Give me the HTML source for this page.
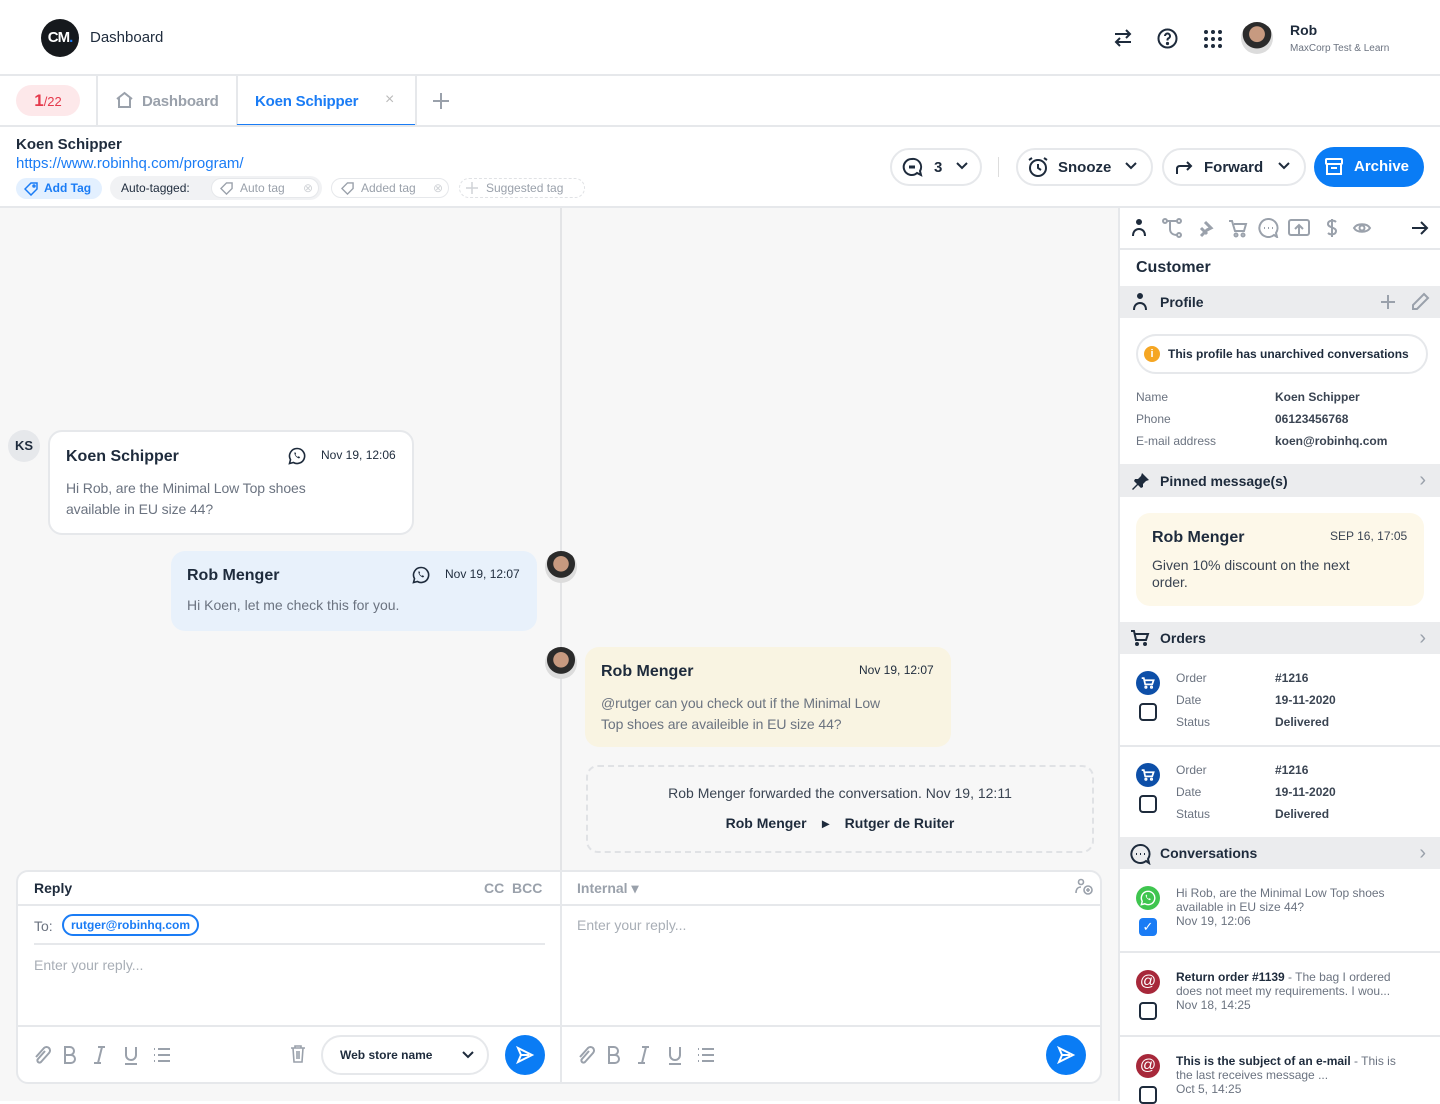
<!DOCTYPE html>
<html><head><meta charset="utf-8"><style>
*{box-sizing:border-box;margin:0;padding:0}
body{width:1440px;height:1101px;overflow:hidden;font-family:"Liberation Sans",sans-serif;color:#1e2b3c;background:#fff;position:relative}
.a{position:absolute}
.b{font-weight:bold}
.pill{position:absolute;border:2px solid #e6e8eb;border-radius:22px;background:#fff;font-size:15px;font-weight:bold;color:#1e2b3c}
.sec{position:absolute;left:1120px;width:320px;height:32px;background:#ebecee;font-size:14px;font-weight:bold;display:flex;align-items:center}
.lbl{position:absolute;font-size:12px;color:#6b7380}
.val{position:absolute;font-size:12px;font-weight:bold;color:#3a4452}
.bubble{position:absolute;border-radius:14px;padding:16px}
.muted{color:#6b7380}
svg{position:absolute}
.chev{position:absolute;right:14px;font-size:20px;color:#9aa1ab;font-weight:normal}
</style></head><body>
<!-- header -->
<div class="a" style="left:41px;top:19px;width:38px;height:38px;border-radius:50%;background:#16191d;color:#fff;font-weight:bold;font-size:15px;line-height:38px;text-align:center;letter-spacing:-1px">CM<span style="color:#1a7cf5">.</span></div>
<div class="a" style="left:90px;top:29px;font-size:15px">Dashboard</div>
<svg style="left:1112px;top:28px" width="22" height="20" viewBox="0 0 22 20" fill="none" stroke="#1e2b3c" stroke-width="2"><path d="M3 6h15M14 2l4 4-4 4M19 14H4M8 10l-4 4 4 4"/></svg>
<svg style="left:1157px;top:28px" width="21" height="21" viewBox="0 0 21 21" fill="none" stroke="#1e2b3c" stroke-width="2"><circle cx="10.5" cy="10.5" r="9"/><path d="M8 8a2.5 2.5 0 1 1 3.5 2.3c-.7.3-1 .8-1 1.5v.7"/><circle cx="10.5" cy="15.5" r=".6" fill="#1e2b3c"/></svg>
<svg style="left:1204px;top:30px" width="18" height="18" viewBox="0 0 18 18" fill="#1e2b3c"><circle cx="2" cy="2" r="2"/><circle cx="9" cy="2" r="2"/><circle cx="16" cy="2" r="2"/><circle cx="2" cy="9" r="2"/><circle cx="9" cy="9" r="2"/><circle cx="16" cy="9" r="2"/><circle cx="2" cy="16" r="2"/><circle cx="9" cy="16" r="2"/><circle cx="16" cy="16" r="2"/></svg>
<div class="a" style="left:1241px;top:22px;width:32px;height:32px;border-radius:50%;background:radial-gradient(circle at 50% 38%,#c79a80 0 30%,#2b2b2b 32% 55%,#dcdcdc 57%)"></div>
<div class="a b" style="left:1290px;top:22px;font-size:14px">Rob</div>
<div class="a" style="left:1290px;top:43px;font-size:10px;color:#6b7380">MaxCorp Test &amp; Learn</div>
<div class="a" style="left:0;top:74px;width:1440px;height:2px;background:#e6e8eb"></div>
<!-- tabs -->
<div class="a" style="left:16px;top:85px;width:64px;height:31px;border-radius:16px;background:#fde8ea;color:#e5394c;text-align:center;line-height:31px"><span class="b" style="font-size:17px">1</span><span style="font-size:13px">/22</span></div>
<div class="a" style="left:96px;top:76px;width:2px;height:50px;background:#e6e8eb"></div>
<svg style="left:115px;top:91px" width="19" height="18" viewBox="0 0 19 18" fill="none" stroke="#9aa1ab" stroke-width="2"><path d="M2 8l7.5-6L17 8M4 7v9h11V7"/></svg>
<div class="a b" style="left:142px;top:93px;font-size:15px;color:#9aa1ab;letter-spacing:-0.2px">Dashboard</div>
<div class="a" style="left:236px;top:76px;width:2px;height:50px;background:#e6e8eb"></div>
<div class="a b" style="left:255px;top:93px;font-size:15px;color:#1a7cf5;letter-spacing:-0.2px">Koen Schipper</div>
<div class="a" style="left:385px;top:91px;font-size:16px;color:#bbb">×</div>
<div class="a" style="left:237px;top:124px;width:180px;height:3px;background:#1a7cf5"></div>
<div class="a" style="left:415px;top:76px;width:2px;height:50px;background:#e6e8eb"></div>
<svg style="left:432px;top:92px" width="18" height="18" viewBox="0 0 18 18" stroke="#9aa1ab" stroke-width="2"><path d="M9 1v16M1 9h16"/></svg>
<div class="a" style="left:0;top:125px;width:1440px;height:2px;background:#e6e8eb"></div>
<!-- info -->
<div class="a b" style="left:16px;top:136px;font-size:15px">Koen Schipper</div>
<div class="a" style="left:16px;top:155px;font-size:15px;color:#1a7cf5">https://www.robinhq.com/program/</div>
<div class="a b" style="left:16px;top:178px;width:86px;height:21px;border-radius:11px;background:#e3f0ff;color:#1a7cf5;font-size:12px;line-height:21px;padding-left:28px">Add Tag</div>
<svg style="left:24px;top:182px" width="14" height="14" viewBox="0 0 14 14" fill="none" stroke="#1a7cf5" stroke-width="1.5"><path d="M7 1h6v6l-6 6-6-6z"/><circle cx="10" cy="4" r="1"/></svg>
<div class="a" style="left:110px;top:176px;width:212px;height:24px;border-radius:12px;background:#f1f2f4"></div>
<div class="a" style="left:121px;top:181px;font-size:12px">Auto-tagged:</div>
<div class="a" style="left:211px;top:178px;width:108px;height:20px;border-radius:10px;background:#fff;border:1px solid #e6e8eb;font-size:12px;color:#9aa1ab;line-height:18px;padding-left:28px">Auto tag<span style="position:absolute;right:5px;color:#d0d3d7">⊗</span></div>
<svg style="left:220px;top:182px" width="13" height="13" viewBox="0 0 14 14" fill="none" stroke="#9aa1ab" stroke-width="1.5"><path d="M7 1h6v6l-6 6-6-6z"/></svg>
<div class="a" style="left:331px;top:178px;width:118px;height:20px;border-radius:10px;border:1px solid #e6e8eb;font-size:12px;color:#9aa1ab;line-height:18px;padding-left:29px">Added tag<span style="position:absolute;right:5px;color:#d0d3d7">⊗</span></div>
<svg style="left:341px;top:182px" width="13" height="13" viewBox="0 0 14 14" fill="none" stroke="#9aa1ab" stroke-width="1.5"><path d="M7 1h6v6l-6 6-6-6z"/></svg>
<div class="a" style="left:459px;top:178px;width:126px;height:20px;border-radius:10px;border:1px dashed #e0e2e5;font-size:12px;color:#9aa1ab;line-height:18px;padding-left:26px">Suggested tag</div>
<svg style="left:466px;top:182px" width="12" height="12" viewBox="0 0 12 12" stroke="#d0d3d7" stroke-width="1.5"><path d="M6 0v12M0 6h12"/></svg>
<div class="pill" style="left:890px;top:148px;width:92px;height:38px"><span style="position:absolute;left:42px;top:9px">3</span></div>
<svg style="left:902px;top:157px" width="21" height="21" viewBox="0 0 21 21" fill="none" stroke="#1e2b3c" stroke-width="2"><path d="M10 2a8 8 0 1 0 5 14l4 2-1-4A8 8 0 0 0 10 2z"/><path d="M7 10h6" stroke-width="3"/></svg>
<div class="a" style="left:998px;top:157px;width:1px;height:20px;background:#ddd"></div>
<div class="pill" style="left:1016px;top:148px;width:137px;height:38px"><span style="position:absolute;left:40px;top:9px">Snooze</span></div>
<svg style="left:1027px;top:156px" width="22" height="22" viewBox="0 0 22 22" fill="none" stroke="#1e2b3c" stroke-width="2"><circle cx="11" cy="12" r="8"/><path d="M11 8v4l3 2M2 4l3-2M20 4l-3-2"/></svg>
<div class="pill" style="left:1162px;top:148px;width:144px;height:38px"><span style="position:absolute;left:40px;top:9px">Forward</span></div>
<svg style="left:1175px;top:159px" width="18" height="16" viewBox="0 0 18 16" fill="none" stroke="#1e2b3c" stroke-width="2"><path d="M2 15v-5c0-2 1-3 3-3h11M12 3l4 4-4 4"/></svg>
<svg style="left:955px;top:161px" width="14" height="10" viewBox="0 0 14 10" fill="none" stroke="#1e2b3c" stroke-width="2"><path d="M2 2l5 5 5-5"/></svg>
<svg style="left:1124px;top:161px" width="14" height="10" viewBox="0 0 14 10" fill="none" stroke="#1e2b3c" stroke-width="2"><path d="M2 2l5 5 5-5"/></svg>
<svg style="left:1277px;top:161px" width="14" height="10" viewBox="0 0 14 10" fill="none" stroke="#1e2b3c" stroke-width="2"><path d="M2 2l5 5 5-5"/></svg>
<div class="a b" style="left:1314px;top:147px;width:110px;height:40px;border-radius:20px;background:#0a7cf5;color:#fff;font-size:15px;line-height:40px;padding-left:40px">Archive</div>
<svg style="left:1324px;top:157px" width="20" height="20" viewBox="0 0 20 20" fill="none" stroke="#fff" stroke-width="2"><rect x="2" y="2" width="16" height="5" rx="1"/><path d="M3 7v10h14V7M7 11h6"/></svg>
<div class="a" style="left:0;top:206px;width:1440px;height:2px;background:#e6e8eb"></div>
<!-- chat area -->
<div class="a" style="left:0;top:208px;width:1119px;height:893px;background:#f7f7f7"></div>
<div class="a" style="left:560px;top:208px;width:2px;height:662px;background:#e3e4e6"></div>
<div class="a b" style="left:8px;top:430px;width:32px;height:32px;border-radius:50%;background:#e6e8eb;font-size:13px;text-align:center;line-height:32px">KS</div>
<div class="bubble" style="left:48px;top:430px;width:366px;height:105px;background:#fff;border:2px solid #e6e8eb"></div>
<div class="a b" style="left:66px;top:448px;font-size:16px">Koen Schipper</div>
<svg style="left:288px;top:447px" width="18" height="18" viewBox="0 0 18 18" fill="none" stroke="#1e2b3c" stroke-width="1.6"><path d="M9 1.5a7.5 7.5 0 0 0-6.5 11.2L1.5 16.5l3.9-1A7.5 7.5 0 1 0 9 1.5z"/><path d="M6.5 5.5c-.5 2 1.5 5 4.5 6l1.2-1.2-1.5-1-1 .6c-1-.5-1.8-1.3-2.2-2.3l.6-1-1-1.5z" fill="#1e2b3c" stroke="none"/></svg>
<div class="a" style="left:321px;top:448px;font-size:12px">Nov 19, 12:06</div>
<div class="a muted" style="left:66px;top:478px;font-size:14px;line-height:21px;letter-spacing:-0.1px">Hi Rob, are the Minimal Low Top shoes<br>available in EU size 44?</div>
<div class="bubble" style="left:171px;top:551px;width:366px;height:80px;background:#e8f1fb"></div>
<div class="a b" style="left:187px;top:567px;font-size:16px">Rob Menger</div>
<svg style="left:412px;top:566px" width="18" height="18" viewBox="0 0 18 18" fill="none" stroke="#1e2b3c" stroke-width="1.6"><path d="M9 1.5a7.5 7.5 0 0 0-6.5 11.2L1.5 16.5l3.9-1A7.5 7.5 0 1 0 9 1.5z"/><path d="M6.5 5.5c-.5 2 1.5 5 4.5 6l1.2-1.2-1.5-1-1 .6c-1-.5-1.8-1.3-2.2-2.3l.6-1-1-1.5z" fill="#1e2b3c" stroke="none"/></svg>
<div class="a" style="left:445px;top:567px;font-size:12px">Nov 19, 12:07</div>
<div class="a muted" style="left:187px;top:597px;font-size:14px">Hi Koen, let me check this for you.</div>
<div class="a" style="left:545px;top:551px;width:32px;height:32px;border-radius:50%;background:radial-gradient(circle at 50% 40%,#c79a80 0 30%,#2b2b2b 32% 55%,#dcdcdc 57%)"></div>
<div class="a" style="left:545px;top:647px;width:32px;height:32px;border-radius:50%;background:radial-gradient(circle at 50% 40%,#c79a80 0 30%,#2b2b2b 32% 55%,#dcdcdc 57%)"></div>
<div class="bubble" style="left:585px;top:647px;width:366px;height:100px;background:#f9f4e2"></div>
<div class="a b" style="left:601px;top:663px;font-size:16px">Rob Menger</div>
<div class="a" style="left:859px;top:663px;font-size:12px">Nov 19, 12:07</div>
<div class="a muted" style="left:601px;top:693px;font-size:14px;line-height:21px;letter-spacing:-0.1px">@rutger can you check out if the Minimal Low<br>Top shoes are availeible in EU size 44?</div>
<div class="a" style="left:586px;top:765px;width:508px;height:88px;border:2px dashed #e0e2e5;border-radius:12px"></div>
<div class="a" style="left:586px;top:785px;width:508px;text-align:center;font-size:14px;color:#3a4452">Rob Menger forwarded the conversation. Nov 19, 12:11</div>
<div class="a b" style="left:586px;top:815px;width:508px;text-align:center;font-size:14px">Rob Menger &nbsp;&nbsp;&nbsp;▸&nbsp;&nbsp;&nbsp; Rutger de Ruiter</div>
<!-- reply -->
<div class="a" style="left:16px;top:870px;width:1086px;height:214px;background:#fff;border:2px solid #e6e8eb;border-radius:12px"></div>
<div class="a" style="left:560px;top:872px;width:2px;height:210px;background:#e6e8eb"></div>
<div class="a" style="left:18px;top:904px;width:1082px;height:2px;background:#e6e8eb"></div>
<div class="a" style="left:18px;top:1025px;width:1082px;height:2px;background:#e6e8eb"></div>
<div class="a b" style="left:34px;top:880px;font-size:14px">Reply</div>
<div class="a b" style="left:484px;top:880px;font-size:14px;color:#9aa1ab">CC &nbsp;BCC</div>
<div class="a b" style="left:577px;top:880px;font-size:14px;color:#9aa1ab">Internal ▾</div>
<svg style="left:1075px;top:878px" width="18" height="18" viewBox="0 0 18 18" fill="none" stroke="#9aa1ab" stroke-width="1.6"><circle cx="6" cy="4" r="2.5"/><path d="M1 15c0-4 2-6 5-6"/><circle cx="13" cy="12" r="4"/><path d="M13 10v4M11 12h4"/></svg>
<div class="a" style="left:34px;top:918px;font-size:14px;color:#6b7380">To:</div>
<div class="a b" style="left:62px;top:914px;height:22px;padding:0 7px;border:2px solid #1a7cf5;border-radius:11px;font-size:12px;line-height:18px;color:#1a7cf5">rutger@robinhq.com</div>
<div class="a" style="left:34px;top:943px;width:511px;height:2px;background:#e6e8eb"></div>
<div class="a" style="left:34px;top:957px;font-size:14px;color:#a8aeb6">Enter your reply...</div>
<div class="a" style="left:577px;top:917px;font-size:14px;color:#a8aeb6">Enter your reply...</div>
<svg style="left:32px;top:1044px" width="150" height="22" viewBox="0 0 150 22" fill="none" stroke="#9aa1ab" stroke-width="2"><path d="M13 7l-7 8a2 2 0 0 0 3 3l8-9a3.5 3.5 0 0 0-5-5l-8 9"/><path d="M33 3h5a4 4 0 0 1 0 8h-5zM33 11h6a4 4 0 0 1 0 8h-6z"/><path d="M66 3h7M62 19h7M70 3l-4 16"/><path d="M94 3v8a5 5 0 0 0 10 0V3M93 20h12"/><path d="M126 5h12M126 11h12M126 17h12M122 5h1M122 11h1M122 17h1"/></svg>
<svg style="left:576px;top:1044px" width="150" height="22" viewBox="0 0 150 22" fill="none" stroke="#9aa1ab" stroke-width="2"><path d="M13 7l-7 8a2 2 0 0 0 3 3l8-9a3.5 3.5 0 0 0-5-5l-8 9"/><path d="M33 3h5a4 4 0 0 1 0 8h-5zM33 11h6a4 4 0 0 1 0 8h-6z"/><path d="M66 3h7M62 19h7M70 3l-4 16"/><path d="M94 3v8a5 5 0 0 0 10 0V3M93 20h12"/><path d="M126 5h12M126 11h12M126 17h12M122 5h1M122 11h1M122 17h1"/></svg>
<svg style="left:290px;top:1045px" width="16" height="18" viewBox="0 0 16 18" fill="none" stroke="#9aa1ab" stroke-width="1.6"><path d="M1 3h14M5 3V1h6v2M3 3l1 14h8l1-14M7 6v8M9 6v8"/></svg>
<div class="a b" style="left:321px;top:1035px;width:168px;height:40px;border:2px solid #e6e8eb;border-radius:20px;font-size:12px;line-height:36px;padding-left:17px">Web store name</div>
<svg style="left:461px;top:1050px" width="14" height="10" viewBox="0 0 14 10" fill="none" stroke="#1e2b3c" stroke-width="2"><path d="M2 2l5 5 5-5"/></svg>
<div class="a" style="left:505px;top:1035px;width:40px;height:40px;border-radius:50%;background:#0a7cf5"></div>
<div class="a" style="left:1046px;top:1035px;width:40px;height:40px;border-radius:50%;background:#0a7cf5"></div>
<svg style="left:515px;top:1046px" width="20" height="18" viewBox="0 0 20 18" fill="none" stroke="#fff" stroke-width="2"><path d="M3 2l14 7-14 7 3-7zM6 9h8"/></svg>
<svg style="left:1056px;top:1046px" width="20" height="18" viewBox="0 0 20 18" fill="none" stroke="#fff" stroke-width="2"><path d="M3 2l14 7-14 7 3-7zM6 9h8"/></svg>
<!-- right panel -->
<div class="a" style="left:1118px;top:208px;width:2px;height:893px;background:#e6e8eb"></div>
<svg style="left:1131px;top:219px" width="16" height="18" viewBox="0 0 16 18" fill="none" stroke="#1e2b3c" stroke-width="2"><circle cx="8" cy="3" r="2" fill="#1e2b3c"/><path d="M2 17c0-5 3-7 6-7s6 2 6 7"/></svg>
<svg style="left:1161px;top:218px" width="240" height="20" viewBox="0 0 240 20" fill="none" stroke="#9aa1ab" stroke-width="2"><circle cx="4" cy="3" r="2"/><circle cx="18" cy="3" r="2"/><circle cx="18" cy="17" r="2"/><path d="M6 3h10M9 3v8c0 4 3 6 7 6"/><path d="M44 4l6 6-4 2-6 6M40 10l6 6" stroke-width="3"/><path d="M68 3h3l3 10h9l2-7H73"/><circle cx="75" cy="17" r="1.5"/><circle cx="82" cy="17" r="1.5"/><path d="M107 1a9 9 0 1 0 6 16l3 2-1-4a9 9 0 0 0-8-14z"/><path d="M103 10h1M107 10h1M111 10h1"/><rect x="128" y="2" width="20" height="15" rx="2"/><path d="M138 18V7M134 11l4-4 4 4"/><path d="M175 4c-2-2-8-2-8 2s8 3 8 7-6 4-8 2M171 1v18"/><path d="M193 10c3-5 13-5 16 0-3 5-13 5-16 0z"/><circle cx="201" cy="10" r="2.5"/></svg>
<svg style="left:1411px;top:220px" width="18" height="16" viewBox="0 0 18 16" fill="none" stroke="#1e2b3c" stroke-width="2"><path d="M1 8h15M10 2l6 6-6 6"/></svg>
<div class="a" style="left:1120px;top:248px;width:320px;height:2px;background:#e6e8eb"></div>
<div class="a b" style="left:1136px;top:259px;font-size:16px">Customer</div>
<div class="sec" style="top:286px;padding-left:40px">Profile</div>
<svg style="left:1379px;top:293px" width="18" height="18" viewBox="0 0 18 18" stroke="#9aa1ab" stroke-width="2"><path d="M9 2v14M2 9h14"/></svg>
<svg style="left:1410px;top:292px" width="20" height="20" viewBox="0 0 20 20" fill="none" stroke="#9aa1ab" stroke-width="2"><path d="M14 2l4 4-11 11H3v-4z"/></svg>
<svg style="left:1132px;top:293px" width="16" height="18" viewBox="0 0 16 18" fill="none" stroke="#1e2b3c" stroke-width="2"><circle cx="8" cy="3" r="2" fill="#1e2b3c"/><path d="M2 17c0-5 3-7 6-7s6 2 6 7"/></svg>
<div class="a" style="left:1136px;top:334px;width:292px;height:40px;border:2px solid #e6e8eb;border-radius:20px"></div>
<div class="a b" style="left:1144px;top:346px;width:16px;height:16px;border-radius:50%;background:#f5a623;color:#fff;font-size:11px;text-align:center;line-height:16px">i</div>
<div class="a b" style="left:1168px;top:347px;font-size:12px">This profile has unarchived conversations</div>
<div class="lbl" style="left:1136px;top:390px">Name</div><div class="val" style="left:1275px;top:390px">Koen Schipper</div>
<div class="lbl" style="left:1136px;top:412px">Phone</div><div class="val" style="left:1275px;top:412px">06123456768</div>
<div class="lbl" style="left:1136px;top:434px">E-mail address</div><div class="val" style="left:1275px;top:434px">koen@robinhq.com</div>
<div class="sec" style="top:464px;height:33px;padding-left:40px">Pinned message(s)<span class="chev">›</span></div>
<svg style="left:1131px;top:472px" width="20" height="18" viewBox="0 0 20 18" fill="#1e2b3c"><path d="M11 1l7 7-3 1-3 3 0 3-2 1-3-3-5 5-1-1 5-5-3-3 1-2 3 0 3-3z"/></svg>
<div class="a" style="left:1136px;top:513px;width:288px;height:93px;background:#fdf8e9;border-radius:14px"></div>
<div class="a b" style="left:1152px;top:529px;font-size:16px">Rob Menger</div>
<div class="a" style="left:1330px;top:529px;font-size:12px;color:#3a4452">SEP 16, 17:05</div>
<div class="a" style="left:1152px;top:557px;font-size:14px;line-height:17px;color:#3a4452">Given 10% discount on the next<br>order.</div>
<div class="sec" style="top:622px;padding-left:40px">Orders<span class="chev">›</span></div>
<svg style="left:1130px;top:630px" width="20" height="16" viewBox="0 0 20 16" fill="none" stroke="#1e2b3c" stroke-width="2"><path d="M1 1h3l2 9h10l2-6H5"/><circle cx="7" cy="14" r="1"/><circle cx="15" cy="14" r="1"/></svg>
<div class="a" style="left:1136px;top:671px;width:24px;height:24px;border-radius:50%;background:#0d4fa8"></div>
<svg style="left:1141px;top:677px" width="14" height="12" viewBox="0 0 20 16" fill="none" stroke="#fff" stroke-width="2.5"><path d="M1 1h3l2 9h10l2-6H5"/><circle cx="7" cy="14" r="1"/><circle cx="15" cy="14" r="1"/></svg>
<div class="a" style="left:1139px;top:703px;width:18px;height:18px;border:2px solid #1e2b3c;border-radius:4px"></div>
<div class="lbl" style="left:1176px;top:671px">Order</div><div class="val" style="left:1275px;top:671px">#1216</div>
<div class="lbl" style="left:1176px;top:693px">Date</div><div class="val" style="left:1275px;top:693px">19-11-2020</div>
<div class="lbl" style="left:1176px;top:715px">Status</div><div class="val" style="left:1275px;top:715px">Delivered</div>
<div class="a" style="left:1120px;top:745px;width:320px;height:2px;background:#e6e8eb"></div>
<div class="a" style="left:1136px;top:763px;width:24px;height:24px;border-radius:50%;background:#0d4fa8"></div>
<svg style="left:1141px;top:769px" width="14" height="12" viewBox="0 0 20 16" fill="none" stroke="#fff" stroke-width="2.5"><path d="M1 1h3l2 9h10l2-6H5"/><circle cx="7" cy="14" r="1"/><circle cx="15" cy="14" r="1"/></svg>
<div class="a" style="left:1139px;top:795px;width:18px;height:18px;border:2px solid #1e2b3c;border-radius:4px"></div>
<div class="lbl" style="left:1176px;top:763px">Order</div><div class="val" style="left:1275px;top:763px">#1216</div>
<div class="lbl" style="left:1176px;top:785px">Date</div><div class="val" style="left:1275px;top:785px">19-11-2020</div>
<div class="lbl" style="left:1176px;top:807px">Status</div><div class="val" style="left:1275px;top:807px">Delivered</div>
<div class="sec" style="top:837px;padding-left:40px">Conversations<span class="chev">›</span></div>
<svg style="left:1129px;top:843px" width="22" height="22" viewBox="0 0 22 22" fill="none" stroke="#1e2b3c" stroke-width="2"><path d="M11 2a9 9 0 1 0 6 16l3 2-1-4A9 9 0 0 0 11 2z"/><path d="M7 11h1M11 11h1M15 11h1"/></svg>
<div class="a" style="left:1136px;top:886px;width:24px;height:24px;border-radius:50%;background:#3fc54f"></div>
<svg style="left:1140px;top:890px" width="16" height="16" viewBox="0 0 18 18" fill="none" stroke="#fff" stroke-width="1.6"><path d="M9 1.5a7.5 7.5 0 0 0-6.5 11.2L1.5 16.5l3.9-1A7.5 7.5 0 1 0 9 1.5z"/><path d="M6.5 5.5c-.5 2 1.5 5 4.5 6l1.2-1.2-1.5-1-1 .6c-1-.5-1.8-1.3-2.2-2.3l.6-1-1-1.5z" fill="#fff" stroke="none"/></svg>
<div class="a" style="left:1139px;top:918px;width:18px;height:18px;background:#1a7cf5;border-radius:4px;color:#fff;font-size:13px;text-align:center;line-height:18px">✓</div>
<div class="a" style="left:1176px;top:886px;font-size:12px;line-height:14px;color:#6b7380">Hi Rob, are the Minimal Low Top shoes<br>available in EU size 44?<br>Nov 19, 12:06</div>
<div class="a" style="left:1120px;top:951px;width:320px;height:2px;background:#e6e8eb"></div>
<div class="a" style="left:1136px;top:970px;width:24px;height:24px;border-radius:50%;background:#a7283a;color:#fff;text-align:center;line-height:24px;font-size:16px">@</div>
<div class="a" style="left:1139px;top:1002px;width:18px;height:18px;border:2px solid #1e2b3c;border-radius:4px"></div>
<div class="a" style="left:1176px;top:970px;font-size:12px;line-height:14px;color:#6b7380"><b style="color:#1e2b3c">Return order #1139</b> - The bag I ordered<br>does not meet my requirements. I wou...<br>Nov 18, 14:25</div>
<div class="a" style="left:1120px;top:1035px;width:320px;height:2px;background:#e6e8eb"></div>
<div class="a" style="left:1136px;top:1054px;width:24px;height:24px;border-radius:50%;background:#a7283a;color:#fff;text-align:center;line-height:24px;font-size:16px">@</div>
<div class="a" style="left:1139px;top:1086px;width:18px;height:18px;border:2px solid #1e2b3c;border-radius:4px"></div>
<div class="a" style="left:1176px;top:1054px;font-size:12px;line-height:14px;color:#6b7380"><b style="color:#1e2b3c">This is the subject of an e-mail</b> - This is<br>the last receives message ...<br>Oct 5, 14:25</div>
</body></html>
